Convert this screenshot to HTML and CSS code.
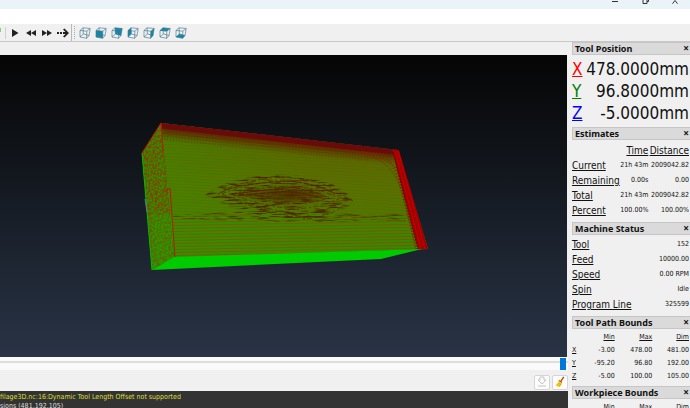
FILE: index.html
```html
<!DOCTYPE html>
<html lang="en">
<head>
<meta charset="utf-8">
<title>CAMotics</title>
<link rel="stylesheet" href="styles.css">
</head>
<body>
<svg class="defs" aria-hidden="true">
  <symbol id="cube" viewBox="0 0 12 12"><path d="M1 3.5 4 .8 11.2 1.5 10 8.5 7.6 11.3 1 10ZM1 3.5 7.8 4.2 11.2 1.5M7.8 4.2 7.6 11.3M4 .8 4.4 7 1 10M4.4 7 10 8.5"/></symbol>
</svg>
<header class="titlebar">
  <button aria-label="Minimize"><svg viewBox="0 0 8 4"><path d="M1 1.500h6"/></svg></button>
  <button aria-label="Restore"><svg viewBox="0 0 8 4"><path d="M2 0v3.500h4V0M6 1.500h1.500V0"/></svg></button>
  <button aria-label="Close"><svg viewBox="0 0 8 4"><path d="M1.500 3.700 4 .5l2.500 3.200"/></svg></button>
</header>
<div class="menubar"></div>
<nav class="toolbar" aria-label="Tools">
  <i class="run"></i><i class="line"></i>
  <div class="group play">
    <button aria-label="Play"><svg viewBox="0 0 12 12"><path d="M3 2 9.500 6 3 10Z"/></svg></button>
    <button aria-label="Slower"><svg viewBox="0 0 12 12"><path d="M6 3v6L1 6ZM11 3v6L6 6Z"/></svg></button>
    <button aria-label="Faster"><svg viewBox="0 0 12 12"><path d="M1 3v6l5-3ZM6 3v6l5-3Z"/></svg></button>
    <button aria-label="Direction"><svg viewBox="0 0 12 12"><path d="M0 5h2v2H0ZM3 5h2v2H3ZM6 5h2.500L6 2.500 7.500 1.500 12 6 7.500 10.500 6 9.500 8.500 7H6Z"/></svg></button>
  </div>
  <i class="line tall"></i><i class="grip"></i>
  <div class="group views">
    <button aria-label="Isometric view"><svg viewBox="0 0 12 12"><use href="#cube"/></svg></button>
    <button aria-label="Front view"><svg viewBox="0 0 12 12"><path class="face" d="M1 3.500 7.800 4.200 7.600 11.300 1 10Z"/><use href="#cube"/></svg></button>
    <button aria-label="Back view"><svg viewBox="0 0 12 12"><path class="face" d="M4 .8 11.200 1.500 10 8.500 4.400 7Z"/><use href="#cube"/></svg></button>
    <button aria-label="Left view"><svg viewBox="0 0 12 12"><path class="face" d="M1 3.500 4 .8 4.400 7 1 10Z"/><use href="#cube"/></svg></button>
    <button aria-label="Right view"><svg viewBox="0 0 12 12"><path class="face" d="M7.800 4.200 11.200 1.500 10 8.500 7.600 11.300Z"/><use href="#cube"/></svg></button>
    <button aria-label="Top view"><svg viewBox="0 0 12 12"><path class="face" d="M1 3.500 4 .8 11.200 1.500 7.800 4.200Z"/><use href="#cube"/></svg></button>
    <button aria-label="Bottom view"><svg viewBox="0 0 12 12"><path class="face" d="M1 10 4.400 7 10 8.500 7.600 11.300Z"/><use href="#cube"/></svg></button>
  </div>
</nav>
<div class="workspace">
  <main class="stage">
    <div class="viewport">
      <svg viewBox="0 55 567 302" role="img" aria-label="Tool path">
        <defs>
          <linearGradient id="front" x1="0" y1="0" x2="0" y2="1">
            <stop offset="0" stop-color="#5c5c00"/><stop offset=".5" stop-color="#577000"/><stop offset="1" stop-color="#427f00"/>
          </linearGradient>
          <linearGradient id="leftShade" x1="0" x2="1">
            <stop offset="0" stop-color="#3c8c00" stop-opacity=".6"/><stop offset=".6" stop-color="#3c8a00" stop-opacity="0"/>
          </linearGradient>
          <pattern id="rows" width="8" height="3" patternUnits="userSpaceOnUse" patternTransform="rotate(3)">
            <path d="M0 .5h8" stroke="#7c4c00" stroke-width=".8" opacity=".4"/><path d="M0 2h8" stroke="#309400" stroke-width=".8" opacity=".3"/>
          </pattern>
          <pattern id="lowRows" width="8" height="3" patternUnits="userSpaceOnUse" patternTransform="rotate(-1)">
            <path d="M0 .5h8" stroke="#884800" opacity=".6"/><path d="M0 2h8" stroke="#18a800" opacity=".5"/>
          </pattern>
          <pattern id="mesh" width="4" height="5" patternUnits="userSpaceOnUse" patternTransform="rotate(-28)">
            <path d="M0 1h2M2 3h2" stroke="#18a800"/><path d="M2 1h1M0 4h2" stroke="#933c00"/>
          </pattern>
          <filter id="grain" x="0" y="0" width="1" height="1" color-interpolation-filters="sRGB">
            <feTurbulence type="fractalNoise" baseFrequency=".07 .6" numOctaves="2" seed="5"/>
            <feColorMatrix values="0 0 0 0 .3  0 0 0 0 .16  0 0 0 0 0  4 0 0 0 -1.9"/>
            <feComposite in2="SourceGraphic" operator="in"/>
          </filter>
          <filter id="speckle" x="0" y="0" width="1" height="1" color-interpolation-filters="sRGB">
            <feTurbulence type="fractalNoise" baseFrequency=".45" numOctaves="2" seed="9"/>
            <feColorMatrix values="0 0 0 0 .5  0 0 0 0 .26  0 0 0 0 0  7 0 0 0 -3.4"/>
            <feComposite in2="SourceGraphic" operator="in"/>
          </filter>
          <filter id="soft" x="-.2" y="-.5" width="1.4" height="2"><feGaussianBlur stdDeviation="3"/></filter>
          <clipPath id="frontClip"><path d="M161 123 398 150 428 249 174 258Z"/></clipPath>
        </defs>
        <path fill="url(#front)" d="M161 123 398 150 428 249 174 258Z"/>
        <path fill="url(#leftShade)" d="M161 123 398 150 428 249 174 258Z"/>
        <path fill="url(#rows)" d="M161 123 398 150 412 215 170 215Z"/>
        <path fill="url(#lowRows)" d="M170 215 415 215 428 249 174 258Z"/>
        <g clip-path="url(#frontClip)">
          <path d="M160 125 398 151" fill="none" stroke="#601000" stroke-width="18" opacity=".65" filter="url(#soft)"/>
          <path d="M161 124 398 151" stroke="#690b0b" stroke-width="9"/>
          <path d="M161 130 396 155M161 133 396 157" stroke="#672800" stroke-dasharray="2 1"/>
          <path d="M161 136 380 158M161 139 370 160" stroke="#653a00" stroke-dasharray="1 2"/>
          <path d="M359 154Q392 154 398 176L418 250" fill="none" stroke="#872600" stroke-width="3" stroke-dasharray="1 2"/>
          <path d="M366 157Q392 158 403 195L416 250" fill="none" stroke="#702c00" stroke-dasharray="1 1"/>
          <path d="M236 194 292 188 326 196 290 203Z" fill="#4c1400" opacity=".6" filter="url(#soft)"/>
          <g class="contours">
            <path d="M218 194Q235 181 282 177Q330 180 348 199Q339 215 307 219Q255 210 218 194Z"/>
            <path d="M222 194Q240 185 282 180Q326 185 345 201Q329 211 300 214Q250 207 222 194Z"/>
            <path d="M232 194Q260 187 291 186Q325 189 339 199Q315 209 291 209Q251 203 232 194Z"/>
            <path d="M238 194Q269 188 293 190Q318 193 329 198Q309 205 286 203Q255 199 238 194Z"/>
            <path d="M248 195Q280 190 319 197Q295 201 248 195Z"/>
          </g>
          <path class="ridge" d="M221 193Q232 184 290 181Q317 184 334 193M232 194 292 187 322 194M239 195 292 191 322 198"/>
          <path filter="url(#grain)" d="M205 195Q235 173 290 175Q340 179 354 202Q335 220 290 219Q235 214 205 195Z"/>
          <path filter="url(#grain)" opacity=".75" d="M172 214Q230 210 285 213L402 214 406 221 280 222 174 219Z"/>
        </g>
        <path fill="#3e7e00" d="M142 153 161 123 174 258 152 270Z"/>
        <path fill="url(#mesh)" d="M142 153 161 123 174 258 152 270Z"/>
        <path filter="url(#speckle)" d="M142 153 161 123 174 258 152 270Z"/>
        <path fill="#00c800" opacity=".25" d="M151 214 173 216 174 258 152 270Z"/>
        <path d="M142 153 152 270" stroke="#00bb00"/>
        <path d="M142 153 161 123 163 153M164 192 170 188 175 258" fill="none" stroke="#b51800"/>
        <path fill="#00ca00" d="M152 270 174 257 422 249 381 259Z"/>
        <path fill="#a00000" d="M392 150 399 150 428 249 418 249Z"/>
        <path d="M395 151 421 249M398 151 425 249" stroke="#c80000" fill="none"/>
        <path d="M393 152 418 249" stroke="#511000" stroke-dasharray="2 1"/>
        <path d="M145 199 147 212" stroke="#667394"/>
      </svg>
    </div>
    <input class="timeline" type="range" min="0" max="100" value="100" aria-label="Playback position">
    <div class="console-tools">
      <button aria-label="Scroll to end" disabled><svg viewBox="0 0 12 12"><path d="M4 1h4v3h2L6 8 2 4h2ZM2 10h8" fill="none" stroke="#c4c4c4"/></svg></button>
      <button aria-label="Clear console"><svg viewBox="0 0 12 12"><path d="m9.800.8-3.300 5" stroke="#a65b1c" stroke-width="1.500"/><path d="M4.800 4.300 8 6.500Q7.800 10 5 11L1.500 9.500Q4 8 4.800 4.300Z" fill="#f3cc24"/><path d="m3.500 9 2-2M5 10.500l2-3" stroke="#c79100" stroke-width=".6"/><path d="m4.800 4.300 3.300 2.200" stroke="#c83c24"/></svg></button>
    </div>
    <output class="console"><span class="warn">filage3D.nc:16:Dynamic Tool Length Offset not supported</span><span>sions (481,192,105)</span></output>
  </main>
  <aside class="sidebar">
    <section>
      <h2>Tool Position<button aria-label="Close Tool Position">×</button></h2>
      <table class="position">
        <tr><th class="x">X</th><td>478.0000mm</td></tr>
        <tr><th class="y">Y</th><td>96.8000mm</td></tr>
        <tr><th class="z">Z</th><td>-5.0000mm</td></tr>
      </table>
    </section>
    <section>
      <h2>Estimates<button aria-label="Close Estimates">×</button></h2>
      <table class="stats estimates">
        <tr><td></td><th>Time</th><th>Distance</th></tr>
        <tr><th>Current</th><td>21h 43m</td><td>2009042.82</td></tr>
        <tr><th>Remaining</th><td>0.00s</td><td>0.00</td></tr>
        <tr><th>Total</th><td>21h 43m</td><td>2009042.82</td></tr>
        <tr><th>Percent</th><td>100.00%</td><td>100.00%</td></tr>
      </table>
    </section>
    <section>
      <h2>Machine Status<button aria-label="Close Machine Status">×</button></h2>
      <table class="stats">
        <tr><th>Tool</th><td>152</td></tr>
        <tr><th>Feed</th><td>10000.00</td></tr>
        <tr><th>Speed</th><td>0.00 RPM</td></tr>
        <tr><th>Spin</th><td>Idle</td></tr>
        <tr><th>Program Line</th><td>325599</td></tr>
      </table>
    </section>
    <section>
      <h2>Tool Path Bounds<button aria-label="Close Tool Path Bounds">×</button></h2>
      <table class="bounds">
        <tr><td></td><th>Min</th><th>Max</th><th>Dim</th></tr>
        <tr><th>X</th><td>-3.00</td><td>478.00</td><td>481.00</td></tr>
        <tr><th>Y</th><td>-95.20</td><td>96.80</td><td>192.00</td></tr>
        <tr><th>Z</th><td>-5.00</td><td>100.00</td><td>105.00</td></tr>
      </table>
    </section>
    <section>
      <h2>Workpiece Bounds<button aria-label="Close Workpiece Bounds">×</button></h2>
      <table class="bounds">
        <tr><td></td><th>Min</th><th>Max</th><th>Dim</th></tr>
      </table>
    </section>
  </aside>
</div>
</body>
</html>
```
FILE: styles.css
```css
* { box-sizing: border-box; }
body {
  margin: 0;
  height: 100vh;
  display: flex;
  flex-direction: column;
  overflow: hidden;
  background: #f0f0f0;
  color: #111;
  font-family: "DejaVu Sans Condensed", "Noto Sans", sans-serif;
  font-size: 7px;
}
button { padding: 0; border: 0; background: none; font: inherit; color: inherit; }
svg { display: block; }
.defs { position: absolute; width: 0; height: 0; }

.titlebar {
  flex: 0 0 9px;
  display: flex;
  justify-content: flex-end;
  gap: 22px;
  padding-right: 11px;
  background: #eaf4f8;
}
.titlebar button { width: 8px; height: 4px; }
.titlebar svg { width: 8px; height: 4px; fill: none; stroke: #333; }
.menubar { flex: 0 0 15px; background: #fff; }
.toolbar {
  flex: 0 0 18px;
  display: flex;
  align-items: center;
  border-bottom: 1px solid #c8c8c8;
}
.toolbar svg { width: 12px; height: 12px; }
.run { width: 1px; height: 4px; margin-bottom: 6px; background: #7fd07f; }
.line { width: 1px; height: 12px; margin-left: 4px; background: #d0d0d0; }
.tall { height: 17px; margin-left: 2px; background: #b8b8b8; }
.group { display: flex; gap: 4px; }
.play { margin-left: 3px; fill: #222; }
.grip { height: 13px; margin: 0 4px 0 2px; border-left: 1px dotted #aaa; }
.views use { fill: none; stroke: #376f88; stroke-width: .6; }
.face { fill: #148bad; }

.workspace {
  flex: 1;
  min-height: 0;
  display: grid;
  grid-template-columns: minmax(0, 1fr) 119px;
  gap: 3px;
}
.stage { display: flex; flex-direction: column; min-height: 0; padding-top: 13px; }
.viewport {
  flex: 1;
  min-height: 0;
  margin-right: 1px;
  background: linear-gradient(#050505, #11151b 35%, #1e2633 70%, #293345);
}
.viewport svg { width: 100%; height: 100%; }
.contours { fill: none; stroke: #552800; stroke-dasharray: 5 2 2 3; opacity: .7; }
.ridge { fill: none; stroke: #581400; stroke-dasharray: 6 1; opacity: .8; }
.timeline {
  appearance: none;
  flex: 0 0 13px;
  width: 100%;
  margin: 0;
  padding-right: 2px;
  background: linear-gradient(#fafafa 4px, #dedede 4px, #dedede 6px, #fafafa 6px);
}
.timeline::-webkit-slider-thumb { appearance: none; width: 6px; height: 12px; background: #0078d7; }
.console-tools { flex: 0 0 21px; display: flex; justify-content: flex-end; align-items: center; gap: 2px; padding-top: 3px; }
.console-tools button {
  width: 16px;
  height: 15px;
  display: grid;
  place-items: center;
  border: 1px solid #d5d5d5;
  border-radius: 2px;
  background: #fcfcfc;
}
.console-tools svg { width: 12px; height: 12px; }
.console {
  flex: 0 0 17px;
  overflow: hidden;
  padding-top: 2px;
  background: #333;
  color: #ddd;
  font-size: 7px;
  line-height: 9px;
  white-space: nowrap;
}
.console span { display: block; }
.console .warn { color: #dede32; }

.sidebar { min-height: 0; overflow: hidden; padding-left: 1px; }
h2 {
  display: flex;
  justify-content: space-between;
  align-items: center;
  height: 13px;
  margin: 0;
  padding: 0 1px 0 2px;
  border: 1px solid #c6c6c6;
  border-right: 0;
  background: #dadada;
  font-family: "Noto Sans", sans-serif;
  font-size: 9px;
  line-height: 11px;
  font-weight: 700;
}
h2 button { font-size: 10px; line-height: 11px; }
table { width: 100%; border-collapse: collapse; }
th, td { padding: 0; font-weight: 400; text-align: right; white-space: nowrap; }
tr > :last-child { padding-right: 1px; }
.estimates tr > :nth-child(2) { padding-right: 1px; }
th { text-decoration: underline; }
th:first-child { text-align: left; }
.position { font-size: 17px; line-height: 22px; margin: 3px 0; }
.position tr { height: 22px; }
.x { color: #f00; }
.y { color: #008000; }
.z { color: #00f; }
.stats { margin: 2px 0 4px; }
.stats tr { height: 15px; }
.stats th { font-size: 10px; line-height: 15px; }
.stats td { line-height: 15px; }
.estimates { margin: 3px 0 4px; }
.bounds { table-layout: fixed; margin: 2px 0 3px; line-height: 13px; }
.bounds tr { height: 13px; }
.bounds tr > :first-child { width: 5px; }
```
